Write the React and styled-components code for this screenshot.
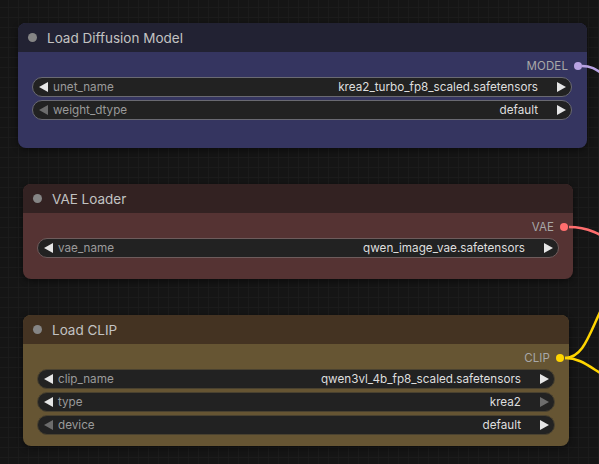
import React from 'react'
import styled, { createGlobalStyle } from 'styled-components'

const GlobalStyle = createGlobalStyle`
    html, body {
        margin: 0;
        padding: 0;
        background: #141414;
    }
    * {
        box-sizing: border-box;
    }
`

const Canvas = styled.div`
    position: relative;
    width: 599px;
    height: 464px;
    overflow: hidden;
    font-family: Inter, "Liberation Sans", sans-serif;
    background-color: #151515;
    background-image:
        linear-gradient(#1b1b1b 1px, transparent 1px),
        linear-gradient(90deg, #1b1b1b 1px, transparent 1px);
    background-size: 10px 10px;
    background-position: -2px -3px;
`

const Node = styled.div`
    position: absolute;
    left: ${p => p.x}px;
    top: ${p => p.y}px;
    width: ${p => p.w}px;
    height: ${p => p.h}px;
    display: flex;
    flex-direction: column;
    border-radius: 8px;
    overflow: hidden;
    background: ${p => p.body};
    box-shadow: 0 2px 6px rgba(0, 0, 0, 0.45);
`

const TitleBar = styled.div`
    display: flex;
    align-items: center;
    gap: 10px;
    height: 29px;
    flex-shrink: 0;
    padding-left: 10px;
    background: ${p => p.color};
    color: #c2c2c2;
    font-size: 13.5px;
`

const TitleDot = styled.span`
    width: 9px;
    height: 9px;
    border-radius: 50%;
    background: #858585;
`

const Body = styled.div`
    display: flex;
    flex-direction: column;
    gap: 3px;
    padding: 4px ${p => p.padRight}px 0 14px;
`

const OutputRow = styled.div`
    display: flex;
    justify-content: flex-end;
    align-items: center;
    gap: 6px;
    height: 20px;
    margin-right: -${p => p.shift}px;
    margin-bottom: -2px;
    color: #a8a8a8;
    font-size: 11.5px;
    letter-spacing: 0.1px;
`

const SlotDot = styled.span`
    width: 8px;
    height: 8px;
    border-radius: 50%;
    background: ${p => p.color};
`

const Combo = styled.div`
    display: flex;
    align-items: center;
    height: 20px;
    padding: 0 5px 0 6px;
    border-radius: 10px;
    background: #222222;
    border: 1px solid ${p => p.outline};
    font-size: 11.7px;
`

const Label = styled.span`
    flex: 1;
    margin-left: 5px;
    color: #9a9a9a;
`

const Value = styled.span`
    margin-right: 19px;
    color: #dedede;
`

const Arrow = ({ dir, dim }) => (
    <svg width="9" height="10" viewBox="0 0 9 10">
        <path
            d={dir === 'left' ? 'M9 0 L0 5 L9 10 Z' : 'M0 0 L9 5 L0 10 Z'}
            fill={dim ? '#6c6c6c' : '#e6e6e6'}
        />
    </svg>
)

const Links = styled.svg`
    position: absolute;
    left: 0;
    top: 0;
    pointer-events: none;
`

const ComboWidget = ({ name, value, first, last, outline }) => (
    <Combo outline={outline}>
        <Arrow dir="left" dim={first} />
        <Label>{name}</Label>
        <Value>{value}</Value>
        <Arrow dir="right" dim={last} />
    </Combo>
)

const nodes = [
    {
        title: 'Load Diffusion Model', x: 18, y: 23, w: 569, h: 125,
        color: '#222233', body: '#353560', padRight: 15, outline: '#6a6a72',
        output: { name: 'MODEL', color: '#b9a3e3' },
        widgets: [
            { name: 'unet_name', value: 'krea2_turbo_fp8_scaled.safetensors' },
            { name: 'weight_dtype', value: 'default', first: true },
        ],
    },
    {
        title: 'VAE Loader', x: 23, y: 184, w: 550, h: 95,
        color: '#332222', body: '#553333', padRight: 14, outline: '#6e5c5c',
        output: { name: 'VAE', color: '#ff6e6e' },
        widgets: [
            { name: 'vae_name', value: 'qwen_image_vae.safetensors' },
        ],
    },
    {
        title: 'Load CLIP', x: 23, y: 315, w: 546, h: 131,
        color: '#443322', body: '#665533', padRight: 14, outline: '#4a4230',
        output: { name: 'CLIP', color: '#ffd500' },
        widgets: [
            { name: 'clip_name', value: 'qwen3vl_4b_fp8_scaled.safetensors' },
            { name: 'type', value: 'krea2', last: true },
            { name: 'device', value: 'default', first: true },
        ],
    },
]

const App = () => {
    return (
        <>
            <GlobalStyle />
            <Canvas>
                {nodes.map(n => (
                    <Node key={n.title} x={n.x} y={n.y} w={n.w} h={n.h} body={n.body}>
                        <TitleBar color={n.color}>
                            <TitleDot />
                            {n.title}
                        </TitleBar>
                        <Body padRight={n.padRight}>
                            <OutputRow shift={n.padRight - 5}>
                                {n.output.name}
                                <SlotDot color={n.output.color} />
                            </OutputRow>
                            {n.widgets.map(w => (
                                <ComboWidget key={w.name} outline={n.outline} {...w} />
                            ))}
                        </Body>
                    </Node>
                ))}
                <Links width="599" height="464" viewBox="0 0 599 464">
                    <path d="M582 66 C596 66 600 74 620 84" stroke="#b9a3e3" strokeWidth="2.5" fill="none" />
                    <path d="M569 227 C588 227 600 234 620 246" stroke="#ff6e6e" strokeWidth="2.5" fill="none" />
                    <path d="M565 358 C585 358 590 330 606 300" stroke="#ffd500" strokeWidth="2.5" fill="none" />
                    <path d="M565 358 C582 358 590 368 612 380" stroke="#ffd500" strokeWidth="2.5" fill="none" />
                </Links>
            </Canvas>
        </>
    )
}

export default App
